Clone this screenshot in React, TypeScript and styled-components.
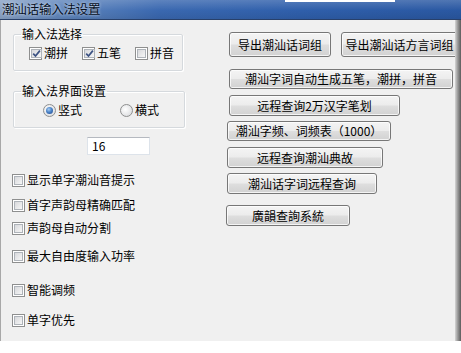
import React from "react";
import styled, { createGlobalStyle } from "styled-components";

const Global = createGlobalStyle`
  html, body { margin: 0; padding: 0; background: #ffffff; }
  body { font-family: "Noto Sans CJK SC", "Noto Sans", sans-serif; font-size: 12px; color: #000; }
`;

const Page = styled.div`
  width: 461px;
  height: 353px;
  background: #ffffff;
  overflow: hidden;
`;

const TitleBar = styled.div`
  height: 20px;
  display: flex;
  align-items: center;
  padding: 0 0 2px 2px;
  box-sizing: border-box;
  border-bottom: 1px solid #28406a;
  background:
    linear-gradient(#ffffff, #ffffff) 285px 0 / 110px 2px no-repeat,
    linear-gradient(180deg, rgba(255,255,255,0.18), rgba(255,255,255,0) 55%, rgba(0,0,0,0.08)),
    linear-gradient(90deg, #8aa3c6 0px, #6187bd 60px, #3a68b0 160px, #2f5fab 300px, #2a58a2 461px);
  font-size: 12.5px;
  line-height: 14px;
  color: #06101f;
  text-shadow: 0 0 3px rgba(255,255,255,0.85);
  letter-spacing: -0.2px;
`;

const Frame = styled.div`
  display: flex;
  height: 321px;
`;

const Main = styled.div`
  flex: 1;
  display: flex;
  background: #f0f0f0;
  border-left: 1px solid #a8a8a8;
  overflow: hidden;
`;

const RightEdge = styled.div`
  width: 6px;
  background: linear-gradient(90deg, #d6d6d6, #9a9a9a 45%, #5c5c5c);
`;

const LeftCol = styled.div`
  width: 226px;
  flex: none;
  box-sizing: border-box;
  padding-left: 11px;
  display: flex;
  flex-direction: column;
  align-items: flex-start;
`;

const Group = styled.fieldset<{ $top: number; $w: number }>`
  margin: ${(p) => p.$top}px 0 0 1px;
  padding: 0 0 0 7px;
  width: ${(p) => p.$w}px;
  box-sizing: border-box;
  min-width: 0;
  border: 1px solid #d5d9dd;
  border-radius: 2px;
  box-shadow: inset 1px 1px 0 #ffffff, 1px 1px 0 #ffffff;
`;

const Legend = styled.legend`
  padding: 0 1px;
  font-size: 12px;
  line-height: 14px;
  color: #000;
`;

const GroupRow = styled.div<{ $indent: number; $gap: number }>`
  display: flex;
  align-items: center;
  height: 16px;
  margin: 4px 0 9px ${(p) => p.$indent}px;
  gap: ${(p) => p.$gap}px;
`;

const Option = styled.label`
  display: flex;
  align-items: center;
  gap: 2px;
  font-size: 12px;
  line-height: 16px;
  white-space: nowrap;
`;

const Box = styled.span`
  width: 13px;
  height: 13px;
  box-sizing: border-box;
  border: 1px solid #8e8f8f;
  padding: 1px;
  background: #ffffff;
  display: flex;
  flex: none;
`;

const BoxInner = styled.span`
  flex: 1;
  border: 1px solid #aeb3b9;
  background: linear-gradient(135deg, #d8d9dc, #f6f6f6);
  display: flex;
  align-items: center;
  justify-content: center;
`;

const Radio = styled.span`
  width: 13px;
  height: 13px;
  box-sizing: border-box;
  border-radius: 50%;
  border: 1px solid #8e8f8f;
  background: radial-gradient(circle at 40% 40%, #ffffff, #d4d6d9);
  display: flex;
  align-items: center;
  justify-content: center;
  flex: none;
`;

const RadioDot = styled.span`
  width: 7px;
  height: 7px;
  border-radius: 50%;
  background: radial-gradient(circle at 40% 35%, #a9cdf1 0%, #4b84c8 45%, #1b3f86 100%);
`;

const NumberInput = styled.div`
  margin: 9px 0 0 75px;
  width: 63px;
  height: 18px;
  box-sizing: border-box;
  border: 1px solid #dde3ea;
  border-top-color: #b5b9c0;
  background: #ffffff;
  padding-left: 4px;
  font-size: 12px;
  line-height: 16px;
`;

const CheckRow = styled.label<{ $top: number }>`
  display: flex;
  align-items: center;
  gap: 2px;
  height: 16px;
  margin-top: ${(p) => p.$top}px;
  font-size: 12px;
  line-height: 16px;
  white-space: nowrap;
`;

const RightCol = styled.div`
  flex: 1;
  padding-top: 12px;
  display: flex;
  flex-direction: column;
  align-items: flex-start;
  min-width: 0;
`;

const ButtonRow = styled.div`
  display: flex;
  gap: 10px;
  margin-left: 2px;
`;

const Button = styled.button<{ $w: number; $h: number; $top?: number; $left?: number }>`
  flex: none;
  width: ${(p) => p.$w}px;
  height: ${(p) => p.$h}px;
  margin: ${(p) => p.$top ?? 0}px 0 0 ${(p) => p.$left ?? 0}px;
  padding: 0;
  box-sizing: border-box;
  border: 1px solid #777777;
  border-radius: 3px;
  background: linear-gradient(180deg, #f4f4f4 0%, #ececec 48%, #dedede 52%, #d2d2d2 100%);
  box-shadow: inset 0 0 0 1px rgba(255, 255, 255, 0.75);
  font-family: "Noto Sans CJK SC", "Noto Sans", sans-serif;
  font-size: 12px;
  line-height: 14px;
  color: #000;
  white-space: nowrap;
  overflow: hidden;
  display: flex;
  align-items: center;
  justify-content: center;
`;

function Check({ checked }: { checked?: boolean }) {
  return (
    <Box>
      <BoxInner>
        {checked && (
          <svg width="9" height="9" viewBox="0 0 9 9">
            <path d="M1.2 4.6 L3.5 7 L7.9 1.6" fill="none" stroke="#3c5283" strokeWidth="1.7" />
          </svg>
        )}
      </BoxInner>
    </Box>
  );
}

function RadioButton({ checked }: { checked?: boolean }) {
  return <Radio>{checked && <RadioDot />}</Radio>;
}

const checks: { label: string; top: number }[] = [
  { label: "显示单字潮汕音提示", top: 17 },
  { label: "首字声韵母精确匹配", top: 9 },
  { label: "声韵母自动分割", top: 7 },
  { label: "最大自由度输入功率", top: 12 },
  { label: "智能调频", top: 18 },
  { label: "单字优先", top: 14 },
];

const buttons: { label: string; w: number; h: number; top: number; left: number }[] = [
  { label: "潮汕字词自动生成五笔，潮拼，拼音", w: 224, h: 20, top: 12, left: 2 },
  { label: "远程查询2万汉字笔划", w: 171, h: 21, top: 6, left: 2 },
  { label: "潮汕字频、词频表（1000）", w: 164, h: 20, top: 5, left: 0 },
  { label: "远程查询潮汕典故", w: 156, h: 21, top: 6, left: 0 },
  { label: "潮汕话字词远程查询", w: 150, h: 21, top: 5, left: 0 },
  { label: "廣韻查詢系統", w: 124, h: 21, top: 11, left: -1 },
];

export default function App() {
  return (
    <Page>
      <Global />
      <TitleBar>潮汕话输入法设置</TitleBar>
      <Frame>
        <Main>
          <LeftCol>
            <Group $top={7} $w={170}>
              <Legend>输入法选择</Legend>
              <GroupRow $indent={8} $gap={14}>
                <Option>
                  <Check checked />
                  潮拼
                </Option>
                <Option>
                  <Check checked />
                  五笔
                </Option>
                <Option>
                  <Check />
                  拼音
                </Option>
              </GroupRow>
            </Group>
            <Group $top={13} $w={172}>
              <Legend>输入法界面设置</Legend>
              <GroupRow $indent={22} $gap={38}>
                <Option>
                  <RadioButton checked />
                  竖式
                </Option>
                <Option>
                  <RadioButton />
                  横式
                </Option>
              </GroupRow>
            </Group>
            <NumberInput>16</NumberInput>
            {checks.map((c) => (
              <CheckRow key={c.label} $top={c.top}>
                <Check />
                {c.label}
              </CheckRow>
            ))}
          </LeftCol>
          <RightCol>
            <ButtonRow>
              <Button $w={102} $h={25}>导出潮汕话词组</Button>
              <Button $w={117} $h={25}>导出潮汕话方言词组</Button>
            </ButtonRow>
            {buttons.map((b) => (
              <Button key={b.label} $w={b.w} $h={b.h} $top={b.top} $left={b.left}>
                {b.label}
              </Button>
            ))}
          </RightCol>
        </Main>
        <RightEdge />
      </Frame>
    </Page>
  );
}
